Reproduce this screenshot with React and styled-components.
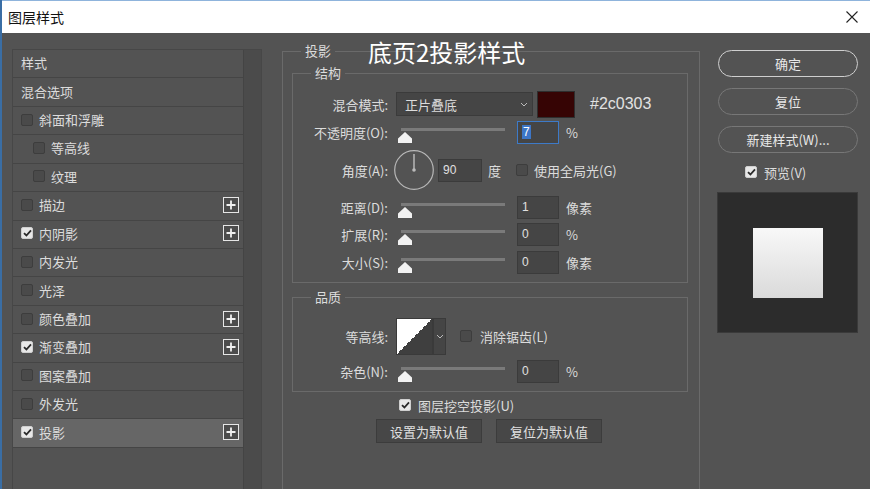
import React from 'react';
import styled, { createGlobalStyle } from 'styled-components';

const GlobalStyle = createGlobalStyle`
  html, body { margin: 0; padding: 0; background: #535353; }
  body { font-family: "Noto Sans CJK SC", "Noto Sans", sans-serif; }
  * { box-sizing: border-box; }
`;

const Window = styled.div`
  position: relative;
  width: 870px;
  height: 489px;
  overflow: hidden;
  background: #535353;
  border-left: 2px solid #3a6ea5;
  display: flex;
  flex-direction: column;
`;

const TitleBar = styled.div`
  flex: none;
  height: 33px;
  background: #fff;
  border-top: 1px solid #8fb4dc;
  display: flex;
  align-items: center;
  justify-content: space-between;
  padding: 0 12px 0 6px;
  font-size: 14px;
  color: #111;
`;

const Body = styled.div`
  flex: 1;
  display: flex;
  padding: 16px 0 0 10px;
  color: #dcdcdc;
  font-size: 13px;
`;

const Sidebar = styled.div`
  flex: none;
  width: 250px;
  display: flex;
  border: 1px solid #474747;
  border-bottom: none;
`;

const List = styled.div`
  flex: 1;
  display: flex;
  flex-direction: column;
`;

const ScrollTrack = styled.div`
  width: 18px;
  background: #4b4b4b;
  border-left: 1px solid #444;
`;

const Item = styled.div`
  height: 28.43px;
  display: flex;
  align-items: center;
  gap: 6px;
  padding: 0 4px 2px ${p => (p.$indent ? 20 : 8)}px;
  background: ${p => (p.$active ? '#666' : 'transparent')};
  border-bottom: 1px solid #454545;
  white-space: nowrap;
`;

const ItemText = styled.span`
  flex: 1;
`;

const Box = styled.span`
  flex: none;
  display: inline-flex;
  align-items: center;
  justify-content: center;
  width: 12px;
  height: 12px;
  border-radius: 2px;
  background: ${p => (p.$checked ? '#e8e8e8' : '#4a4a4a')};
  border: 1px solid ${p => (p.$checked ? '#cfcfcf' : '#3d3d3d')};
`;

const PlusBox = styled.span`
  flex: none;
  width: 16px;
  height: 16px;
  border: 1.5px solid #e6e6e6;
  display: inline-flex;
  align-items: center;
  justify-content: center;
  background: #4c4c4c;
`;

const Main = styled.fieldset`
  flex: none;
  width: 418px;
  height: 470px;
  margin: -7px 0 0 20px;
  padding: 0 11px 0 9px;
  border: 1px solid #6a6a6a;
  min-inline-size: 0;
`;

const Legend = styled.legend`
  margin-left: ${p => p.$offset}px;
  padding: 0 4px;
  line-height: 18px;
  font-size: 13px;
  color: #dcdcdc;
`;

const Group = styled.fieldset`
  margin: ${p => p.$top}px 0 0 0;
  padding: ${p => p.$pt}px 0 6px 0;
  border: 1px solid #6a6a6a;
  min-inline-size: 0;
`;

const Row = styled.div`
  height: ${p => p.$h}px;
  display: flex;
  align-items: center;
`;

const Label = styled.span`
  width: 95px;
  margin-right: 8px;
  text-align: right;
  white-space: nowrap;
`;

const Select = styled.div`
  width: 137px;
  height: 24px;
  background: #454545;
  border: 1px solid #3b3b3b;
  display: flex;
  align-items: center;
  justify-content: space-between;
  padding: 0 4px 0 8px;
`;

const Swatch = styled.div`
  width: 38px;
  height: 27px;
  margin-left: 4px;
  background: #360404;
  border: 1px solid #2e2e2e;
`;

const Hex = styled.span`
  margin-left: 15px;
  font-family: "Liberation Sans", Arial, sans-serif;
  font-size: 16px;
  color: #e2e2e2;
`;

const SliderBox = styled.div`
  position: relative;
  width: 114px;
  height: 22px;
  margin-right: 7px;
`;

const Track = styled.div`
  position: absolute;
  left: 5px;
  top: 7px;
  width: 104px;
  height: 3px;
  background: #7a7a7a;
`;

const Thumb = styled.svg`
  position: absolute;
  left: 2px;
  top: 11px;
`;

const Field = styled.div`
  width: ${p => p.$w || 42}px;
  height: 23px;
  margin-left: ${p => p.$ml || 0}px;
  background: #454545;
  border: 1px solid ${p => (p.$focus ? '#3d7ac8' : '#3b3b3b')};
  display: flex;
  align-items: center;
  padding-left: 4px;
  font-family: "Liberation Sans", Arial, sans-serif;
  font-size: 12px;
  color: #e0e0e0;
`;

const Selected = styled.span`
  background: #3d76c7;
  color: #fff;
  padding: 0 1px;
`;

const Unit = styled.span`
  margin-left: ${p => p.$ml || 7}px;
`;

const Dial = styled.svg`
  margin-left: -2px;
`;

const CheckLine = styled.label`
  display: flex;
  align-items: center;
  gap: ${p => p.$gap || 6}px;
  margin-left: ${p => p.$ml || 0}px;
  white-space: nowrap;
`;

const Contour = styled.div`
  display: flex;
  height: 37px;
`;

const ContourPreview = styled.div`
  width: 37px;
  height: 37px;
  border: 1px solid #3a3a3a;
  background: linear-gradient(to bottom right, #fff 50%, #3f3f3f 50%);
`;

const ContourArrow = styled.div`
  width: 13px;
  height: 37px;
  background: #454545;
  border: 1px solid #3a3a3a;
  display: flex;
  align-items: center;
  justify-content: center;
`;

const KnockRow = styled.div`
  height: 24px;
  margin-top: 1px;
  display: flex;
  align-items: center;
  padding-left: 107px;
`;

const ButtonRow = styled.div`
  display: flex;
  justify-content: center;
  gap: 14px;
  margin-top: 2px;
  padding-right: 2px;
`;

const FlatButton = styled.div`
  width: 106px;
  height: 24px;
  background: #474747;
  border: 1px solid #3c3c3c;
  display: flex;
  align-items: center;
  justify-content: center;
  color: #e0e0e0;
`;

const Side = styled.div`
  flex: none;
  width: 141px;
  margin-left: 17px;
  display: flex;
  flex-direction: column;
  padding-top: 1px;
`;

const PillButton = styled.div`
  height: 27px;
  margin: 0 0 11px 1px;
  padding-bottom: 1px;
  border-radius: 14px;
  border: 1.5px solid ${p => (p.$primary ? '#cfcfcf' : '#777')};
  display: flex;
  align-items: center;
  justify-content: center;
  color: #e8e8e8;
  font-size: 13px;
`;

const PreviewToggle = styled.div`
  height: 26px;
  margin-top: -5px;
  display: flex;
  align-items: center;
  padding-left: 28px;
  font-size: 13px;
`;

const PreviewBox = styled.div`
  width: 141px;
  height: 141px;
  margin-top: 7px;
  background: #2c2c2c;
  border: 1px solid #3a3a3a;
  display: flex;
  align-items: center;
  justify-content: center;
`;

const PreviewSquare = styled.div`
  width: 70px;
  height: 70px;
  background: linear-gradient(to bottom, #f8f8f8, #dadada);
`;

const Caption = styled.div`
  position: absolute;
  left: 366px;
  top: 37px;
  font-size: 24px;
  line-height: 30px;
  color: #fff;
  white-space: nowrap;
`;

const Check = ({ checked }) => (
  <Box $checked={checked}>
    {checked && (
      <svg width="9" height="8" viewBox="0 0 9 8">
        <path d="M1 4.2 L3.4 6.5 L8 1.3" fill="none" stroke="#2a2a2a" strokeWidth="1.8" />
      </svg>
    )}
  </Box>
);

const Plus = () => (
  <PlusBox>
    <svg width="10" height="10" viewBox="0 0 10 10">
      <path d="M5 0.5 V9.5 M0.5 5 H9.5" stroke="#f0f0f0" strokeWidth="1.8" />
    </svg>
  </PlusBox>
);

const Chevron = () => (
  <svg width="8" height="5" viewBox="0 0 8 5">
    <path d="M1 1 L4 4 L7 1" fill="none" stroke="#bbb" strokeWidth="1" />
  </svg>
);

const Slider = () => (
  <SliderBox>
    <Track />
    <Thumb width="14" height="11" viewBox="0 0 14 11">
      <polygon points="7,0 14,6.5 14,11 0,11 0,6.5" fill="#f2f2f2" />
    </Thumb>
  </SliderBox>
);

const items = [
  { label: '样式' },
  { label: '混合选项' },
  { label: '斜面和浮雕', box: true },
  { label: '等高线', box: true, indent: true },
  { label: '纹理', box: true, indent: true },
  { label: '描边', box: true, plus: true },
  { label: '内阴影', box: true, checked: true, plus: true },
  { label: '内发光', box: true },
  { label: '光泽', box: true },
  { label: '颜色叠加', box: true, plus: true },
  { label: '渐变叠加', box: true, checked: true, plus: true },
  { label: '图案叠加', box: true },
  { label: '外发光', box: true },
  { label: '投影', box: true, checked: true, plus: true, active: true },
];

const sliderRows = [
  { label: '距离(D):', value: '1', unit: '像素', h: 26 },
  { label: '扩展(R):', value: '0', unit: '%', h: 28 },
  { label: '大小(S):', value: '0', unit: '像素', h: 28 },
];

export default function App() {
  return (
    <Window>
      <GlobalStyle />
      <TitleBar>
        <span>图层样式</span>
        <svg width="12" height="12" viewBox="0 0 12 12">
          <path d="M0.5 0.5 L11.5 11.5 M11.5 0.5 L0.5 11.5" stroke="#222" strokeWidth="1.1" />
        </svg>
      </TitleBar>
      <Body>
        <Sidebar>
          <List>
            {items.map(it => (
              <Item key={it.label} $indent={it.indent} $active={it.active}>
                {it.box && <Check checked={it.checked} />}
                <ItemText>{it.label}</ItemText>
                {it.plus && <Plus />}
              </Item>
            ))}
          </List>
          <ScrollTrack />
        </Sidebar>

        <Main>
          <Legend $offset={9}>投影</Legend>
          <Group $top={4} $pt={8}>
            <Legend $offset={18}>结构</Legend>
            <Row $h={28}>
              <Label>混合模式:</Label>
              <Select>
                <span>正片叠底</span>
                <Chevron />
              </Select>
              <Swatch />
              <Hex>#2c0303</Hex>
            </Row>
            <Row $h={28}>
              <Label>不透明度(O):</Label>
              <Slider />
              <Field $focus>
                <Selected>7</Selected>
              </Field>
              <Unit>%</Unit>
            </Row>
            <Row $h={48}>
              <Label>角度(A):</Label>
              <Dial width="40" height="40" viewBox="0 0 40 40">
                <circle cx="20" cy="20" r="19.3" fill="none" stroke="#b8b8b8" strokeWidth="1.2" />
                <path d="M20 20 V4" stroke="#d0d0d0" strokeWidth="1.2" />
                <circle cx="20" cy="20" r="1.8" fill="#bbb" />
              </Dial>
              <Field $w={44} $ml={4}>90</Field>
              <Unit $ml={6}>度</Unit>
              <CheckLine $ml={15}>
                <Check />
                使用全局光(G)
              </CheckLine>
            </Row>
            {sliderRows.map(r => (
              <Row key={r.label} $h={r.h}>
                <Label>{r.label}</Label>
                <Slider />
                <Field>{r.value}</Field>
                <Unit>{r.unit}</Unit>
              </Row>
            ))}
          </Group>

          <Group $top={5} $pt={9}>
            <Legend $offset={18}>品质</Legend>
            <Row $h={42}>
              <Label>等高线:</Label>
              <Contour>
                <ContourPreview />
                <ContourArrow>
                  <Chevron />
                </ContourArrow>
              </Contour>
              <CheckLine $ml={14} $gap={8}>
                <Check />
                消除锯齿(L)
              </CheckLine>
            </Row>
            <Row $h={28}>
              <Label>杂色(N):</Label>
              <Slider />
              <Field>0</Field>
              <Unit>%</Unit>
            </Row>
          </Group>

          <KnockRow>
            <CheckLine $gap={7}>
              <Check checked />
              图层挖空投影(U)
            </CheckLine>
          </KnockRow>
          <ButtonRow>
            <FlatButton>设置为默认值</FlatButton>
            <FlatButton>复位为默认值</FlatButton>
          </ButtonRow>
        </Main>

        <Side>
          <PillButton $primary>确定</PillButton>
          <PillButton>复位</PillButton>
          <PillButton>新建样式(W)...</PillButton>
          <PreviewToggle>
            <CheckLine $gap={7}>
              <Check checked />
              预览(V)
            </CheckLine>
          </PreviewToggle>
          <PreviewBox>
            <PreviewSquare />
          </PreviewBox>
        </Side>
      </Body>
      <Caption>底页2投影样式</Caption>
    </Window>
  );
}
